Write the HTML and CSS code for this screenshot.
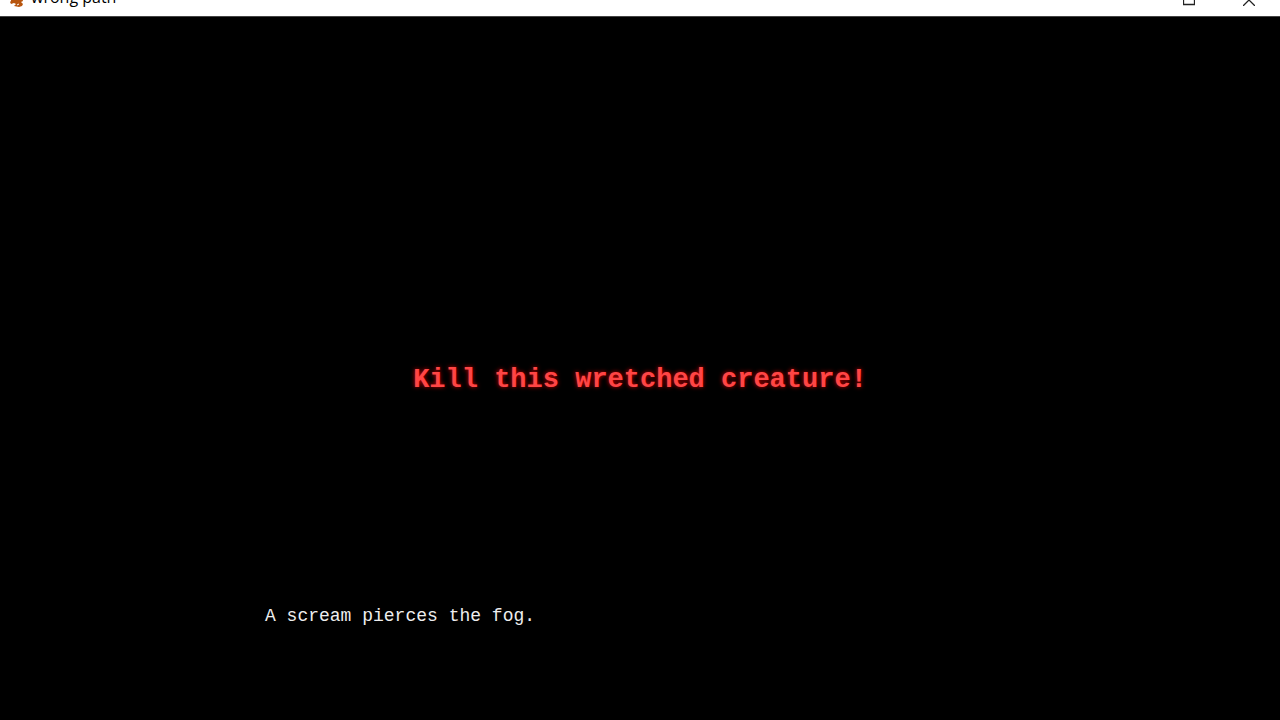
FILE: index.html
```html
<!DOCTYPE html>
<html lang="en">
<head>
<meta charset="utf-8">
<title>wrong path</title>
<link rel="stylesheet" href="styles.css">
</head>
<body>
<div class="window">
<header class="titlebar">
<svg class="logo" viewBox="0 0 16 16" aria-hidden="true"><path d="M3 2h8l3 4 1 4-2 1 2 2-1 2-3 1-5-1 2-2-2-1-3 1-1-2 1-1z" fill="#b8560f"/><path d="M9 14l2-1" stroke="#fff"/></svg>
<h1 class="title">wrong path</h1>
<div class="controls">
<button class="control" aria-label="Minimize"></button>
<button class="control" aria-label="Maximize"><svg viewBox="0 0 12 12"><path d="M.5.5h11v10H.5z"/></svg></button>
<button class="control" aria-label="Close"><svg viewBox="0 0 12 12"><path d="M0 0l12 12M12 0L0 12"/></svg></button>
</div>
</header>
<main class="scene">
<p class="shout">Kill this wretched creature!</p>
<p class="narration">A scream pierces the fog.</p>
</main>
</div>
</body>
</html>
```
FILE: styles.css
```css
* { box-sizing: border-box; }
body { margin: 0; background: #000; }
.window { height: 100vh; display: flex; flex-direction: column; overflow: hidden; }
.titlebar { display: flex; align-items: flex-end; height: 17px; flex: none; background: #fff; border-bottom: 1px solid #444; overflow: hidden; padding: 0 1px 0 8px; }
.logo { width: 16px; height: 16px; margin-bottom: 9px; flex: none; }
.title { margin: 0 0 7px 7px; font: 400 16px/24px "Open Sans", sans-serif; color: #000; flex: 1; }
.controls { display: flex; }
.control { width: 60px; height: 32px; padding: 0; border: 0; background: none; display: flex; align-items: center; justify-content: center; }
.control svg { width: 12px; height: 12px; fill: none; stroke: #222; stroke-width: 1.3; }
.scene { flex: 1; display: grid; grid-template-rows: 1fr auto 1fr; padding-top: 22px; }
.shout { grid-row: 2; margin: 0; text-align: center; font: 700 27px/40px "Liberation Mono", monospace; color: #ff4545; text-shadow: 0 0 4px #d00000; }
.narration { grid-row: 3; align-self: end; margin: 0 0 88px; padding-left: 265px; font: 400 18px/32px "Liberation Mono", monospace; color: #eee; }
```
